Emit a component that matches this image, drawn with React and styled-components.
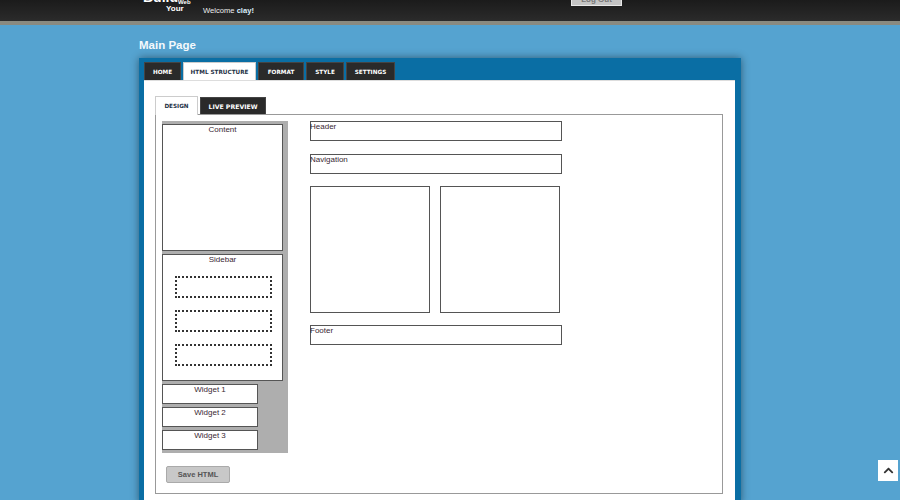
import React from "react";
import styled, { createGlobalStyle } from "styled-components";
import { FaChevronUp } from "react-icons/fa";

const Global = createGlobalStyle`
  html, body {
    margin: 0;
    padding: 0;
    height: 500px;
    overflow: hidden;
    background: #55a3d0;
    font-family: "Liberation Sans", Arial, sans-serif;
  }
`;

const Page = styled.div`
  position: relative;
  width: 900px;
  height: 500px;
  overflow: hidden;
`;

const TopBar = styled.header`
  height: 21px;
  background: linear-gradient(#1b1b1b, #2b2b2b);
  border-bottom: 4px solid #8a8a80;
  overflow: hidden;
`;

const TopInner = styled.div`
  display: flex;
  align-items: flex-start;
  width: 602px;
  margin-left: 139px;
`;

const Logo = styled.div`
  position: relative;
  width: 64px;
  height: 21px;
  flex: none;
  color: #fff;
`;

const LogoBuild = styled.span`
  position: absolute;
  left: 4px;
  top: -10px;
  font-size: 14px;
  line-height: 14px;
  font-weight: bold;
`;

const LogoWeb = styled.span`
  position: absolute;
  left: 39px;
  top: 0;
  font-size: 6px;
  line-height: 5px;
  font-weight: bold;
`;

const LogoYour = styled.span`
  position: absolute;
  left: 27px;
  top: 5px;
  font-size: 8px;
  line-height: 8px;
  font-weight: bold;
`;

const Welcome = styled.div`
  margin-top: 5px;
  width: 368px;
  flex: none;
  font-size: 7.6px;
  line-height: 11px;
  color: #eee;
  b {
    color: #d8eefa;
  }
`;

const LogOut = styled.button`
  width: 51px;
  height: 6px;
  padding: 0;
  border: 1px solid #e8e8e8;
  border-top: 0;
  background: #c4c4c4;
  color: #777;
  font: bold 8px/1 "Liberation Sans", Arial, sans-serif;
  overflow: hidden;
  span {
    display: block;
    margin-top: -5px;
  }
`;

const Main = styled.main`
  width: 602px;
  margin-left: 139px;
`;

const Title = styled.h1`
  margin: 0;
  padding-top: 13px;
  height: 20px;
  font-size: 11.5px;
  line-height: 15px;
  font-weight: bold;
  color: #f4f9fc;
`;

const Panel = styled.section`
  height: 442px;
  padding: 4px 6px 0 5px;
  background: #0a6ea4;
  box-shadow: 0 0 8px rgba(0, 0, 0, 0.45);
`;

const TabBar = styled.nav`
  display: flex;
  gap: ${(p) => p.$gap}px;
  height: ${(p) => p.$height}px;
`;

const Tab = styled.div`
  display: flex;
  align-items: center;
  justify-content: center;
  box-sizing: border-box;
  width: ${(p) => p.$w}px;
  height: ${(p) => p.$height}px;
  margin-top: ${(p) => p.$top || 0}px;
  background: ${(p) => (p.$active ? "#fff" : "#2a2a2a")};
  color: ${(p) => (p.$active ? "#1f3347" : "#fff")};
  border: 1px solid ${(p) => (p.$active ? "#ccc" : "#444")};
  border-bottom: 0;
  font-family: "DejaVu Sans", sans-serif;
  font-size: ${(p) => p.$size || 5.7}px;
  font-weight: bold;
  white-space: nowrap;
`;

const Content = styled.div`
  height: 420px;
  padding: 15px 12px 0 11px;
  background: #fff;
  border-top: 1px solid #ddd;
  box-sizing: border-box;
`;

const Canvas = styled.div`
  box-sizing: border-box;
  display: flex;
  height: 380px;
  padding: 6px 0 0 6px;
  border: 1px solid #999;
  background: #fff;
`;

const LeftColumn = styled.div`
  flex: none;
  width: 126px;
`;

const Palette = styled.div`
  height: 332px;
  padding-top: 3px;
  box-sizing: border-box;
  background: #aeaeae;
`;

const Box = styled.div`
  box-sizing: border-box;
  width: ${(p) => p.$w}px;
  height: ${(p) => p.$h}px;
  margin-bottom: ${(p) => p.$mb || 0}px;
  background: #fff;
  border: 1px solid #555;
  color: #3a1f33;
  font-size: 8px;
  line-height: 10px;
  text-align: ${(p) => (p.$center ? "center" : "left")};
  text-indent: ${(p) => (p.$center ? 0 : -1)}px;
  flex: none;
`;

const SlotList = styled.div`
  display: flex;
  flex-direction: column;
  gap: 12px;
  padding: 11px 0 0 12px;
`;

const Slot = styled.div`
  box-sizing: border-box;
  width: 97px;
  height: 22px;
  border: 2px dotted #333;
`;

const Layout = styled.div`
  display: flex;
  flex-direction: column;
  margin-left: 22px;
`;

const Columns = styled.div`
  display: flex;
  gap: 10px;
  margin-bottom: 12px;
`;

const SaveButton = styled.button`
  display: block;
  width: 64px;
  height: 17px;
  margin: 13px 0 0 4px;
  padding: 0;
  border: 1px solid #aaa;
  border-radius: 2px;
  background: #c8c8c8;
  color: #555;
  font: bold 7.5px/1 "Liberation Sans", Arial, sans-serif;
`;

const ToTop = styled.a`
  position: absolute;
  right: 2px;
  bottom: 19px;
  display: flex;
  align-items: center;
  justify-content: center;
  width: 20px;
  height: 21px;
  background: #fff;
  color: #333;
  font-size: 11px;
`;

const mainTabs = [
  ["HOME", 37],
  ["HTML STRUCTURE", 73],
  ["FORMAT", 46],
  ["STYLE", 38],
  ["SETTINGS", 49],
];

export default function App() {
  return (
    <Page>
      <Global />
      <TopBar>
        <TopInner>
          <Logo>
            <LogoBuild>Build</LogoBuild>
            <LogoWeb>Web</LogoWeb>
            <LogoYour>Your</LogoYour>
          </Logo>
          <Welcome>
            Welcome <b>clay!</b>
          </Welcome>
          <LogOut>
            <span>Log Out</span>
          </LogOut>
        </TopInner>
      </TopBar>
      <Main>
        <Title>Main Page</Title>
        <Panel>
          <TabBar $gap={2} $height={18}>
            {mainTabs.map(([label, w]) => (
              <Tab key={label} $w={w} $height={18} $active={label === "HTML STRUCTURE"}>
                {label}
              </Tab>
            ))}
          </TabBar>
          <Content>
            <TabBar $gap={2} $height={18}>
              <Tab $w={43} $height={19} $active>
                DESIGN
              </Tab>
              <Tab $w={66} $height={17} $top={1} $size={6.2}>
                LIVE PREVIEW
              </Tab>
            </TabBar>
            <Canvas>
              <LeftColumn>
                <Palette>
                  <Box $w={121} $h={127} $mb={3} $center>
                    Content
                  </Box>
                  <Box $w={121} $h={127} $mb={3} $center>
                    Sidebar
                    <SlotList>
                      <Slot />
                      <Slot />
                      <Slot />
                    </SlotList>
                  </Box>
                  <Box $w={96} $h={20} $mb={3} $center>
                    Widget 1
                  </Box>
                  <Box $w={96} $h={20} $mb={3} $center>
                    Widget 2
                  </Box>
                  <Box $w={96} $h={20} $center>
                    Widget 3
                  </Box>
                </Palette>
                <SaveButton>Save HTML</SaveButton>
              </LeftColumn>
              <Layout>
                <Box $w={252} $h={20} $mb={13}>
                  Header
                </Box>
                <Box $w={252} $h={20} $mb={12}>
                  Navigation
                </Box>
                <Columns>
                  <Box $w={120} $h={127} />
                  <Box $w={120} $h={127} />
                </Columns>
                <Box $w={252} $h={20}>
                  Footer
                </Box>
              </Layout>
            </Canvas>
          </Content>
        </Panel>
      </Main>
      <ToTop>
        <FaChevronUp />
      </ToTop>
    </Page>
  );
}
